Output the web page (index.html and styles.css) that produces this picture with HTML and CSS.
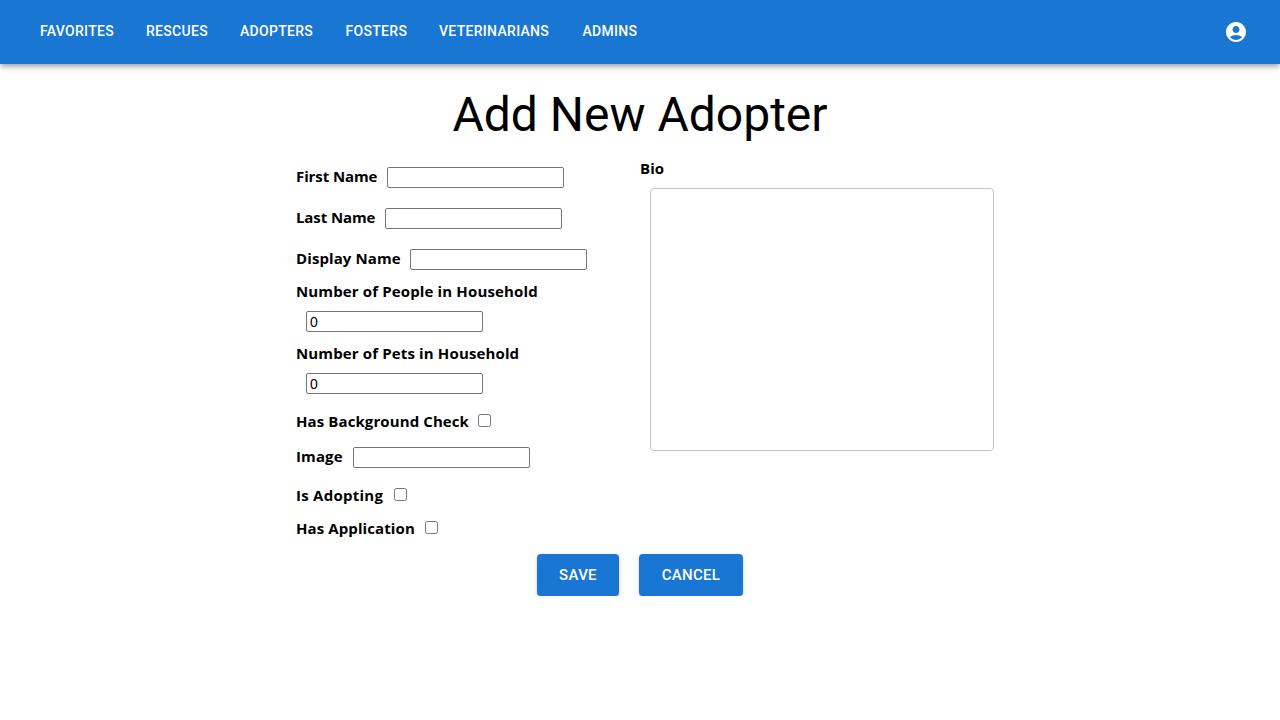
FILE: index.html
```html
<!DOCTYPE html>
<html lang="en">
<head>
<meta charset="utf-8">
<title>Add New Adopter</title>
<link rel="stylesheet" href="styles.css">
</head>
<body>
<header class="appbar">
  <nav class="nav">
    <a class="nav-link favorites">FAVORITES</a>
    <a class="nav-link rescues">RESCUES</a>
    <a class="nav-link adopters">ADOPTERS</a>
    <a class="nav-link fosters">FOSTERS</a>
    <a class="nav-link veterinarians">VETERINARIANS</a>
    <a class="nav-link admins">ADMINS</a>
  </nav>
  <svg class="account" viewBox="0 0 24 24" aria-label="Account"><path fill="currentColor" d="M12 2C6.480 2 2 6.480 2 12s4.480 10 10 10 10-4.480 10-10S17.520 2 12 2zm0 4c1.930 0 3.500 1.570 3.500 3.500S13.930 13 12 13s-3.500-1.570-3.500-3.500S10.070 6 12 6zm0 14c-2.030 0-4.430-.820-6.140-2.880C7.550 15.800 9.680 15 12 15s4.450.8 6.140 2.120C16.430 19.180 14.030 20 12 20z"/></svg>
</header>
<main>
  <h1 class="title">Add New Adopter</h1>
  <form class="form">
    <div class="fields">
      <div class="row"><label class="label first-name">First Name</label><input class="input" type="text"></div>
      <div class="row"><label class="label last-name">Last Name</label><input class="input" type="text"></div>
      <div class="row"><label class="label display-name">Display Name</label><input class="input" type="text"></div>
      <div class="stack"><label class="label people">Number of People in Household</label><input class="input" type="text" value="0"></div>
      <div class="stack"><label class="label pets">Number of Pets in Household</label><input class="input" type="text" value="0"></div>
      <div class="row check-row"><label class="label background">Has Background Check</label><input class="check" type="checkbox"></div>
      <div class="row"><label class="label image">Image</label><input class="input" type="text"></div>
      <div class="row check-row"><label class="label adopting">Is Adopting</label><input class="check" type="checkbox"></div>
      <div class="row check-row"><label class="label application">Has Application</label><input class="check" type="checkbox"></div>
    </div>
    <div class="bio">
      <label class="label bio-label">Bio</label>
      <textarea class="bio-text"></textarea>
    </div>
  </form>
  <div class="actions">
    <button class="button save" type="button">SAVE</button>
    <button class="button cancel" type="button">CANCEL</button>
  </div>
</main>
</body>
</html>
```
FILE: styles.css
```css
* { box-sizing: border-box; }
body { margin: 0; background: #fff; color: #000; font-family: Roboto, sans-serif; }
.appbar {
  display: flex; align-items: center; justify-content: space-between;
  height: 64px; padding: 0 32px 0 40px; background: #1976d2; color: #fff;
  box-shadow: 0 2px 4px -1px rgba(0,0,0,.2), 0 4px 5px 0 rgba(0,0,0,.14), 0 1px 10px 0 rgba(0,0,0,.12);
}
.nav { display: flex; padding-bottom: 2px; }
.nav-link { font-size: 14px; font-weight: 500; line-height: 24px; letter-spacing: .3px; white-space: nowrap; }
.favorites { width: 106px; }
.rescues { width: 94px; }
.adopters { width: 105.500px; }
.fosters { width: 93.500px; }
.veterinarians { width: 143.500px; }
.account { width: 24px; height: 24px; }
.title { margin: 23px 0 14px; text-align: center; font-size: 48px; font-weight: 400; line-height: 56px; }
.form { display: flex; width: 688px; margin: 0 auto; }
.fields { width: 344px; }
.row { display: flex; align-items: center; gap: 10px; height: 41px; }
.check-row { height: 33px; }
.stack { height: 62px; }
.label { display: block; font-family: "Open Sans", "Noto Sans", sans-serif; font-size: 15px; font-weight: 700; line-height: 22px; padding-bottom: 2px; letter-spacing: .1px; white-space: nowrap; }
.row .label { padding-bottom: 4px; }
.check-row .label { padding-bottom: 0; }
.stack .input { display: block; margin: 7px 0 0 10px; }
.first-name { width: 81px; letter-spacing: -.1px; }
.last-name { width: 79px; letter-spacing: -.1px; }
.display-name { width: 104px; }
.people, .pets { letter-spacing: .14px; }
.background { width: 172px; }
.image { width: 47px; }
.adopting { width: 88px; letter-spacing: .25px; }
.application { width: 119px; }
.input { width: 177px; height: 21px; margin: 0; padding: 1px 3px; border: 1px solid #767676; border-radius: 2px; font: 14px "Liberation Sans", sans-serif; letter-spacing: -.5px; }
.check { width: 13px; height: 13px; margin: 0; }
.bio { width: 344px; }
.bio-text { display: block; width: 344px; height: 263px; margin: 7px 0 0 10px; border: 1px solid #c4c4c4; border-radius: 4px; resize: none; }
.actions { display: flex; justify-content: center; gap: 20px; margin-top: 10px; }
.button {
  height: 42px; padding: 0; border: 0; border-radius: 4px; background: #1976d2; color: #fff;
  font: 500 15px/26px Roboto, sans-serif; letter-spacing: .3px;
  box-shadow: 0 3px 1px -2px rgba(0,0,0,.2), 0 2px 2px 0 rgba(0,0,0,.14), 0 1px 5px 0 rgba(0,0,0,.12);
}
.save { width: 82px; }
.cancel { width: 104px; }
```
